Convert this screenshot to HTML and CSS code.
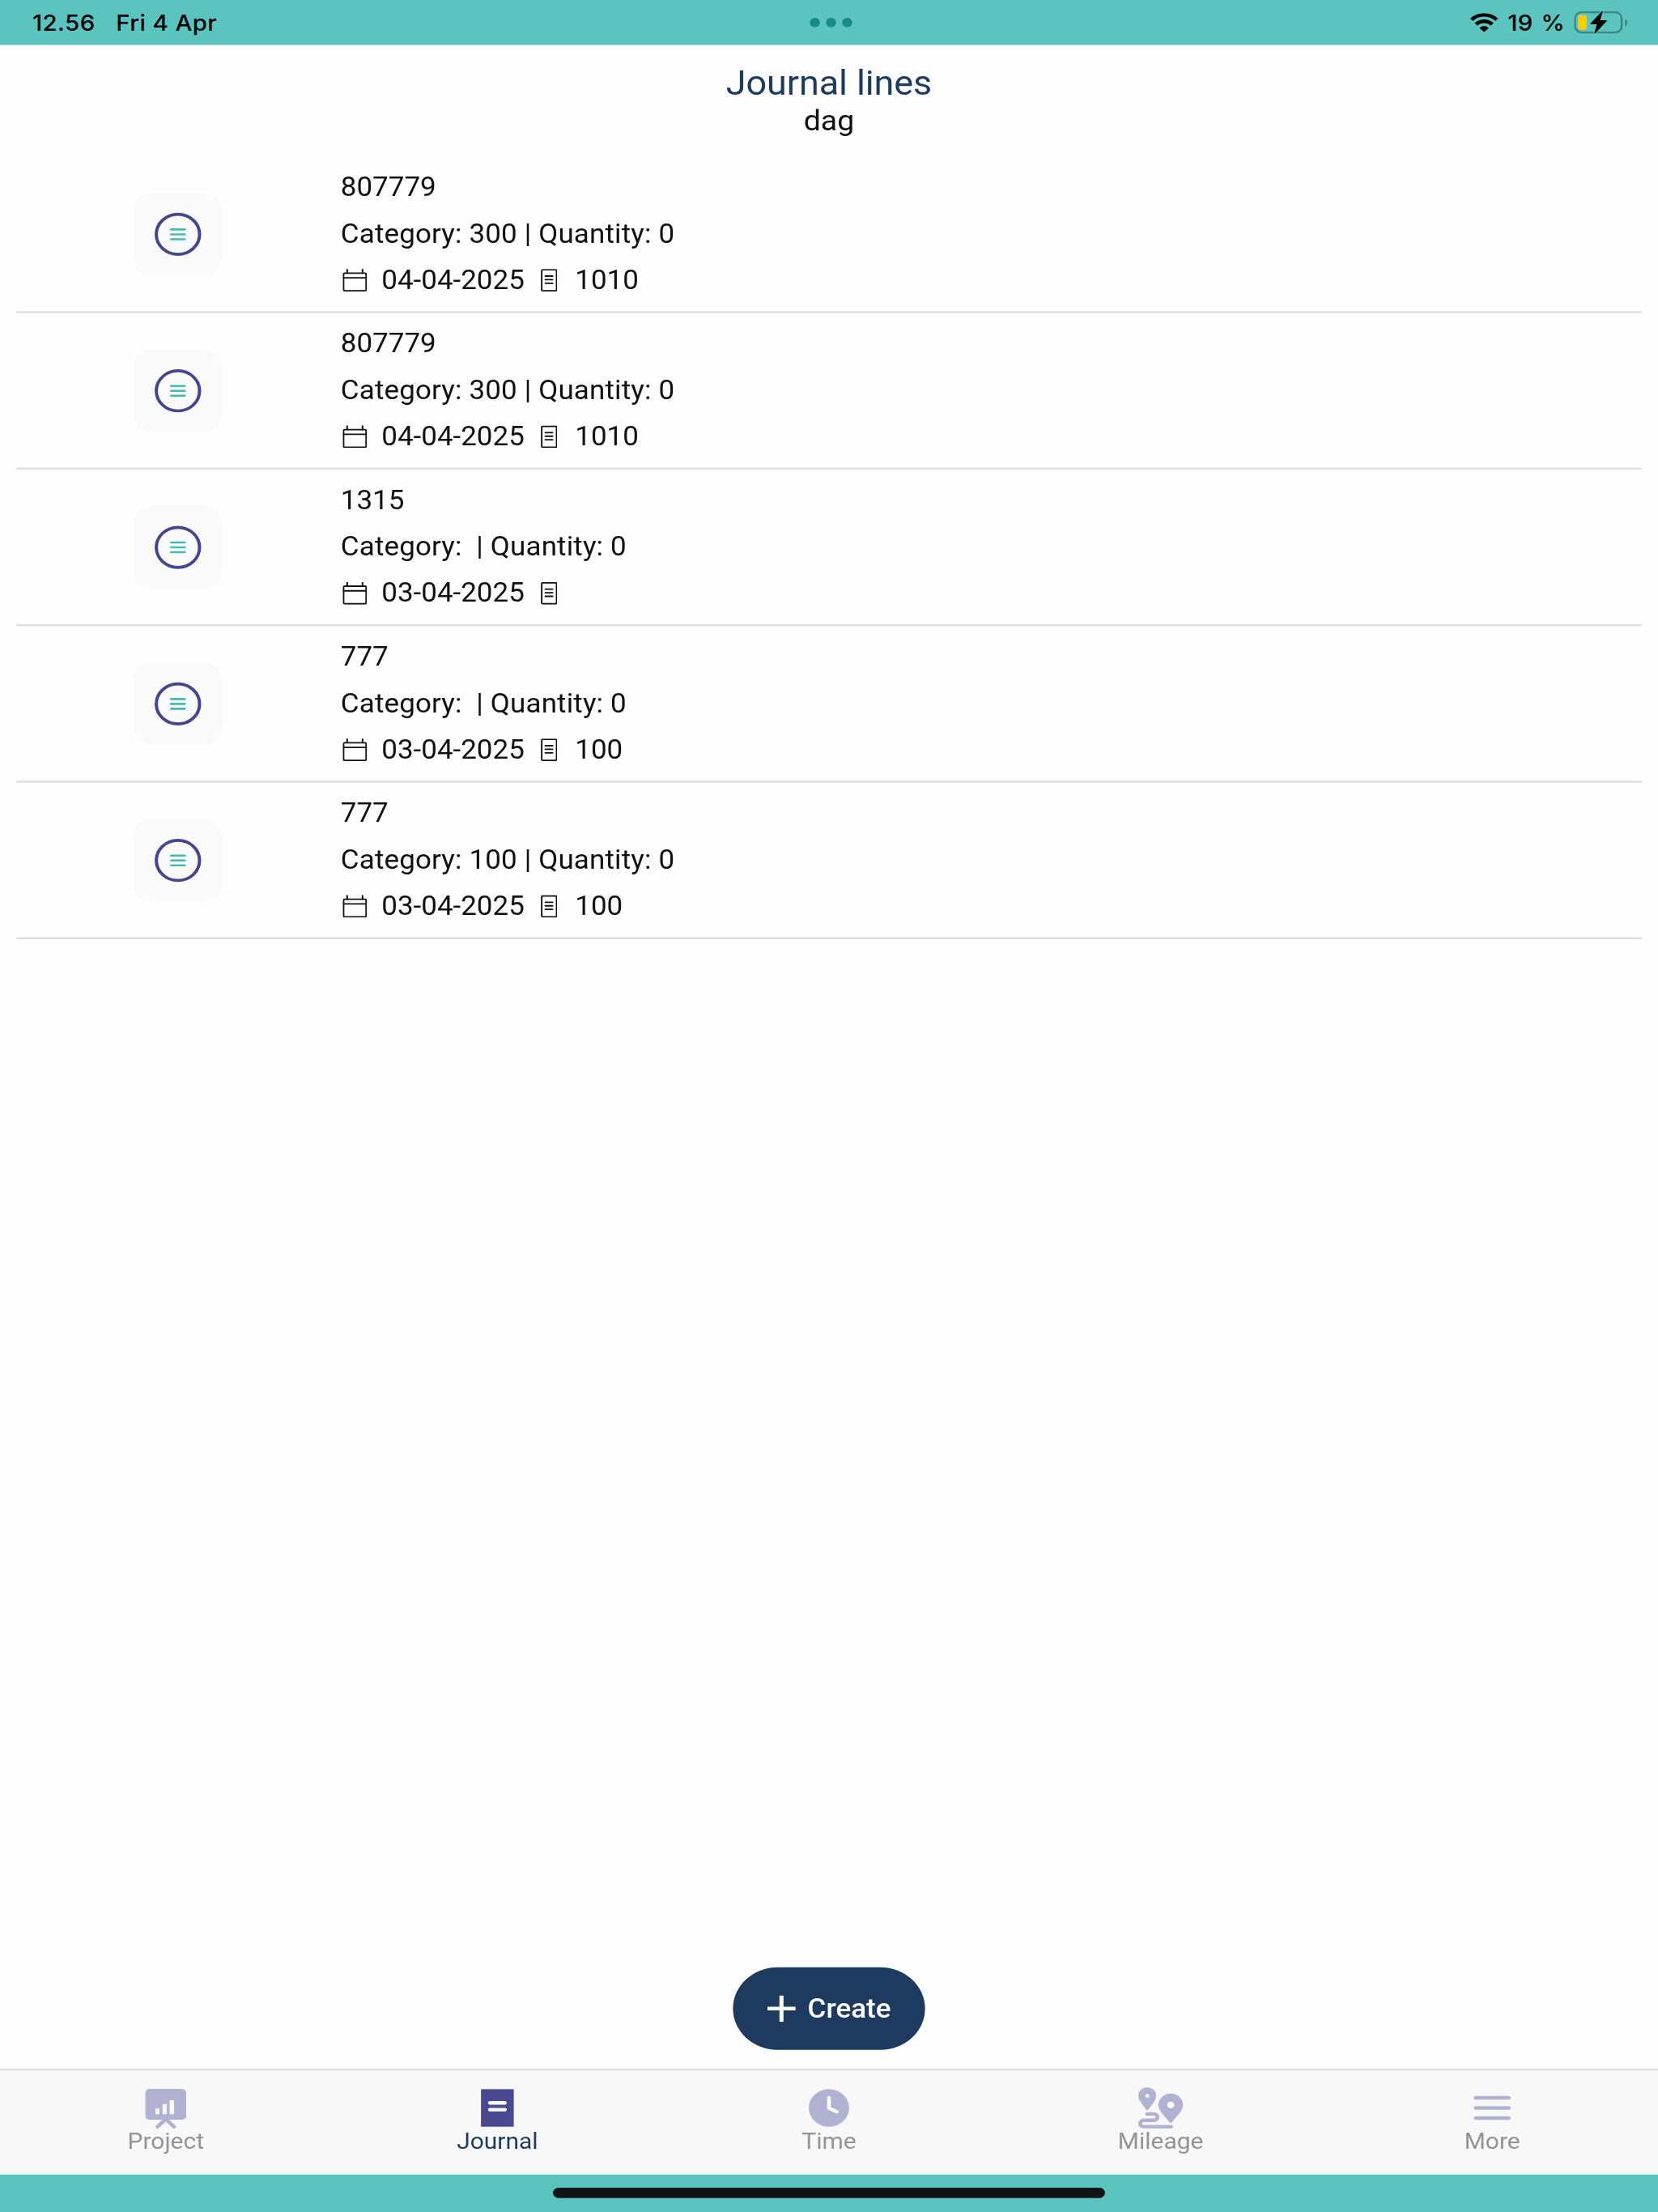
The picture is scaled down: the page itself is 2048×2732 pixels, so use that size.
FILE: index.html
```
<!DOCTYPE html>
<html lang="en">
<head>
    <meta charset="UTF-8">
    <title>Journal lines</title>
    <link rel="stylesheet" href="styles.css">
</head>
<body>
    <div class="screen">
        <header class="status-bar">
            <div class="status-left">
                <span>12.56</span>
                <span>Fri 4 Apr</span>
            </div>
            <div class="status-dots"><i></i><i></i><i></i></div>
            <div class="status-right">
                <svg class="wifi" viewBox="0 0 14 10">
                    <path d="M.8 3.5a8.8 8.8 0 0 1 12.4 0M3 6a5.6 5.6 0 0 1 8 0" fill="none" stroke="#000" stroke-width="1.9"/>
                    <path d="M7 10.2L4.7 7.9a3.2 3.2 0 0 1 4.6 0z"/>
                </svg>
                <span>19 %</span>
                <svg class="battery" viewBox="0 0 27 12">
                    <rect x=".5" y=".5" width="23" height="10.8" rx="3.2" fill="none" stroke="#3c8580"/>
                    <path d="M25.2 4v4c1.6-.6 1.6-3.4 0-4z" fill="#3c8580"/>
                    <rect x="2" y="2" width="4.2" height="7.9" rx="1.3" fill="#ffcc00"/>
                    <path d="M13.9.2L8.3 6.7h3.3l-1.3 4.9 5.7-6.6h-3.4z" stroke="#5bc4bf" stroke-width="1.5"/>
                    <path d="M13.9.2L8.3 6.7h3.3l-1.3 4.9 5.7-6.6h-3.4z" stroke="#000" stroke-width=".5" stroke-linejoin="round"/>
                </svg>
            </div>
        </header>

        <main class="content">
            <h1>Journal lines</h1>
            <h2>dag</h2>
            <div id="journalLines"></div>
            <button class="create-btn">
                <svg viewBox="0 0 14 14"><path d="M7 0v14M0 7h14" stroke="#fff" stroke-width="2"/></svg>
                Create
            </button>
        </main>

        <nav class="tab-bar">
            <a class="tab">
                <svg viewBox="0 0 24 24">
                    <rect x="1.9" y="1.9" width="20.2" height="16.4" rx="2"/>
                    <path class="line" d="M7.9 22l4.1-4 4.1 4"/>
                    <path class="hole" d="M6.9 12.3h1.9v3.1H6.9zM10.4 10h2.1v5.4h-2.1zM13.9 7.9h2.2v7.5h-2.2z"/>
                </svg>
                Project
            </a>
            <a class="tab active">
                <svg viewBox="0 0 24 24">
                    <rect x="3.9" y="2" width="16.2" height="20"/>
                    <path class="cut" d="M8.3 9.3h7.4M8.3 12.9h7.4"/>
                </svg>
                Journal
            </a>
            <a class="tab">
                <svg viewBox="0 0 24 24">
                    <circle cx="12" cy="12" r="10"/>
                    <path class="cut" d="M12 6.6v5.5l3.8 1.9"/>
                </svg>
                Time
            </a>
            <a class="tab">
                <svg viewBox="0 0 24 24">
                    <path d="M5.4 1A4.4 4.4 0 0 0 1 5.4C1 8 3.4 10.6 4.8 12.8q.6.7 1.2 0C7.4 10.6 9.8 8 9.8 5.4A4.4 4.4 0 0 0 5.4 1z"/>
                    <path d="M17 4.3a6.1 6.1 0 0 0-6.1 6.1c0 3.3 3.2 5.9 5.3 9q.8.9 1.6 0c2.1-3.1 5.3-5.7 5.3-9A6.1 6.1 0 0 0 17 4.3z"/>
                    <path class="line" d="M5.4 15.2h3.4a1.7 1.7 0 0 1 0 3.4H3.6a1.7 1.7 0 0 0 0 3.4h13.6"/>
                    <circle class="hole" cx="5.4" cy="5.5" r="1"/>
                    <circle class="hole" cx="17" cy="10.4" r="1.8"/>
                </svg>
                Mileage
            </a>
            <a class="tab">
                <svg viewBox="0 0 24 24">
                    <path class="line" d="M3.8 6.6h16.4M3.8 12h16.4M3.8 17.4h16.4"/>
                </svg>
                More
            </a>
        </nav>
        <footer class="home-area"><div class="home-indicator"></div></footer>
    </div>

    <script>
        const journalLines = [
            { number: '807779', category: '300', quantity: 0, date: '04-04-2025', task: '1010' },
            { number: '807779', category: '300', quantity: 0, date: '04-04-2025', task: '1010' },
            { number: '1315', category: '', quantity: 0, date: '03-04-2025', task: '' },
            { number: '777', category: '', quantity: 0, date: '03-04-2025', task: '100' },
            { number: '777', category: '100', quantity: 0, date: '03-04-2025', task: '100' },
        ];

        const container = document.getElementById('journalLines');

        journalLines.forEach(line => {
            const row = document.createElement('div');
            row.className = 'journal-line';
            row.innerHTML = `
                <div class="line-icon">
                    <svg viewBox="0 0 24 24">
                        <circle cx="12" cy="12" r="10.7" fill="none" stroke="#46468f" stroke-width="1.6"/>
                        <path d="M8.6 9.4h6.8M8.6 12h6.8M8.6 14.6h6.8" stroke="#45bab3" stroke-width="1.1" stroke-linecap="round"/>
                    </svg>
                </div>
                <div class="line-info">
                    <p>${line.number}</p>
                    <p class="line-category">Category: ${line.category} | Quantity: ${line.quantity}</p>
                    <p class="line-meta">
                        <svg class="calendar" viewBox="0 0 12 12">
                            <rect x=".4" y="2.2" width="11.2" height="9.4" rx=".6"/>
                            <path d="M.4 4.7h11.2M2.2 0v2.2M9.8 0v2.2"/>
                        </svg>
                        <span>${line.date}</span>
                        <svg class="document" viewBox="0 0 8 12">
                            <rect x=".4" y=".4" width="7.4" height="11.2" rx=".5"/>
                            <path d="M2.2 3.8h3.6M2.2 5.7h3.6M2.2 7.6h3.6"/>
                        </svg>
                        <span>${line.task}</span>
                    </p>
                </div>
            `;
            container.appendChild(row);
        });
    </script>
</body>
</html>
```
FILE: styles.css
```
* {
    box-sizing: border-box;
}

body {
    margin: 0;
    width: 2048px;
    height: 2732px;
    overflow: hidden;
    background-color: #fefefe;
}

/* 820x1180 tablet layout at 2x, scaled up to fill the window */
.screen {
    width: 820px;
    height: 1180px;
    zoom: 2;
    transform: scale(1.24878, 1.157627);
    transform-origin: 0 0;
    display: flex;
    flex-direction: column;
    font-family: Roboto, sans-serif;
    font-size: 14px;
    color: #111;
}

svg {
    display: block;
    flex: none;
}

.status-bar {
    height: 24px;
    padding: 0 14.5px 0 16px;
    background-color: #5bc4bf;
    display: grid;
    grid-template-columns: 1fr auto 1fr;
    align-items: center;
    font-family: Inter, sans-serif;
    font-size: 11.8px;
    font-weight: 500;
    letter-spacing: .15px;
    color: #000;
}

.status-left {
    display: flex;
    gap: 10.3px;
}

.status-dots {
    display: flex;
    gap: 3px;
}

.status-dots i {
    width: 5px;
    height: 5px;
    border-radius: 50%;
    background-color: #178b85;
}

.status-right {
    display: flex;
    align-items: center;
    justify-content: flex-end;
    gap: 4.5px;
    word-spacing: .6px;
}

.wifi {
    width: 14px;
    height: 10px;
}

.battery {
    width: 27px;
    height: 12px;
}

.content {
    flex: 1;
    display: flex;
    flex-direction: column;
    padding: 9.5px 8px 10px;
}

h1, h2 {
    margin: 0;
    font-weight: 400;
    text-align: center;
}

h1 {
    font-size: 18px;
    line-height: 22px;
    letter-spacing: -.04px;
    color: #1f3a5f;
}

h2 {
    font-size: 15px;
    line-height: 18px;
}

#journalLines {
    margin-top: 10px;
}

.journal-line {
    height: 83.5px;
    display: flex;
    align-items: center;
    border-bottom: 1px solid #dedede;
}

.line-icon {
    width: 44px;
    height: 44px;
    margin: 0 58.4px 0 58.1px;
    border-radius: 9px;
    background-color: #fafafa;
    display: flex;
    align-items: center;
    justify-content: center;
}

.line-icon svg {
    width: 24px;
    height: 24px;
}

.line-info p {
    margin: 0;
    line-height: 24.8px;
    white-space: pre;
}

.line-info .line-category {
    letter-spacing: .06px;
}

.line-info .line-meta {
    display: flex;
    align-items: center;
    white-space: normal;
}

.line-meta svg {
    fill: none;
    stroke: #111;
    stroke-width: .8;
    stroke-linecap: round;
}

.calendar {
    width: 12px;
    height: 12px;
    margin: 0 7px 0 1.2px;
}

.document {
    width: 8px;
    height: 12px;
    margin: 0 9px 0 8px;
}

.create-btn {
    width: 95px;
    height: 44px;
    margin: auto auto 0;
    padding: 0;
    border: none;
    border-radius: 22px;
    background-color: #1f3a5f;
    color: #fff;
    font: 500 14px Roboto, sans-serif;
    display: flex;
    align-items: center;
    justify-content: center;
    gap: 6px;
}

.create-btn svg {
    width: 14px;
    height: 14px;
}

.tab-bar {
    height: 56.5px;
    padding-top: 8px;
    border-top: 1px solid #dedede;
    background-color: #f8f8f8;
    display: flex;
}

.tab {
    flex: 1;
    display: flex;
    flex-direction: column;
    align-items: center;
    font-size: 12px;
    line-height: 14px;
    color: #949494;
}

.tab svg {
    width: 24px;
    height: 24px;
    margin-bottom: -1px;
    fill: #b1b1d2;
    stroke-width: 1.9;
    stroke-linecap: round;
    stroke-linejoin: round;
}

.tab.active {
    color: #1f3a5f;
}

.tab.active svg {
    fill: #494992;
}

.tab .line {
    fill: none;
    stroke: #b1b1d2;
}

.tab .cut {
    fill: none;
    stroke: #fafafa;
}

.tab .hole {
    fill: #fafafa;
}

.home-area {
    height: 20px;
    padding-top: 7px;
    background-color: #5bc4bf;
}

.home-indicator {
    width: 273px;
    height: 5.5px;
    margin: 0 auto;
    border-radius: 3px;
    background-color: #141414;
}
```
